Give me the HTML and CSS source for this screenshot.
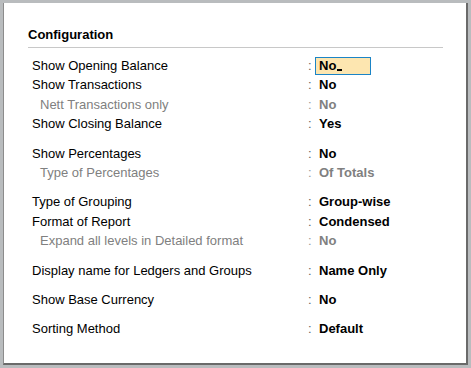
FILE: index.html
```html
<!DOCTYPE html>
<html>
<head>
<meta charset="utf-8">
<link rel="stylesheet" href="styles.css">
</head>
<body>
<div class="panel">
  <div class="heading">Configuration</div>
  <div class="group">
    <div class="row"><span class="label">Show Opening Balance</span><span class="colon">:</span><span class="value"><span class="input">No<span class="cursor"></span></span></span></div>
    <div class="row"><span class="label">Show Transactions</span><span class="colon">:</span><span class="value">No</span></div>
    <div class="row sub"><span class="label">Nett Transactions only</span><span class="colon">:</span><span class="value">No</span></div>
    <div class="row"><span class="label">Show Closing Balance</span><span class="colon">:</span><span class="value">Yes</span></div>
  </div>
  <div class="group">
    <div class="row"><span class="label">Show Percentages</span><span class="colon">:</span><span class="value">No</span></div>
    <div class="row sub"><span class="label">Type of Percentages</span><span class="colon">:</span><span class="value">Of Totals</span></div>
  </div>
  <div class="group">
    <div class="row"><span class="label">Type of Grouping</span><span class="colon">:</span><span class="value">Group-wise</span></div>
    <div class="row"><span class="label">Format of Report</span><span class="colon">:</span><span class="value">Condensed</span></div>
    <div class="row sub"><span class="label">Expand all levels in Detailed format</span><span class="colon">:</span><span class="value">No</span></div>
  </div>
  <div class="group">
    <div class="row"><span class="label">Display name for Ledgers and Groups</span><span class="colon">:</span><span class="value">Name Only</span></div>
  </div>
  <div class="group">
    <div class="row"><span class="label">Show Base Currency</span><span class="colon">:</span><span class="value">No</span></div>
  </div>
  <div class="group">
    <div class="row"><span class="label">Sorting Method</span><span class="colon">:</span><span class="value">Default</span></div>
  </div>
</div>
</body>
</html>
```
FILE: styles.css
```css
html, body {
  margin: 0;
  padding: 0;
}
body {
  background: #b9bcbe;
  width: 471px;
  height: 368px;
  padding: 3px 3px 3px 3px;
  box-sizing: border-box;
  font-family: "Liberation Sans", Arial, sans-serif;
  font-size: 13px;
  color: #000;
}
.panel {
  box-sizing: border-box;
  width: 465px;
  height: 362px;
  background: #fff;
  border-left: 1px solid #8c8c8c;
  border-right: 2px solid #6a6a6a;
  border-bottom: 2px solid #6a6a6a;
  padding: 24px 23px 0 24px;
}
.heading {
  font-weight: bold;
  line-height: 16px;
  padding-bottom: 4px;
  border-bottom: 1px solid #c8c8c8;
  margin-bottom: 8px;
}
.group {
  margin-bottom: 10px;
}
.row {
  display: flex;
  line-height: 19.4px;
  height: 19.4px;
  padding-left: 4px;
}
.label {
  flex: 0 0 276px;
  white-space: nowrap;
}
.colon {
  flex: 0 0 11px;
  color: #666;
}
.value {
  font-weight: bold;
  white-space: nowrap;
  display: flex;
  align-items: center;
}
.sub .label {
  padding-left: 8px;
  box-sizing: border-box;
  color: #808080;
}
.sub .colon {
  color: #9a9a9a;
}
.sub .value {
  color: #808080;
}
.input {
  display: flex;
  align-items: center;
  box-sizing: border-box;
  width: 56px;
  height: 18px;
  margin-left: -4px;
  padding-left: 3px;
  background: #fde6b0;
  border: 1px solid #1b84c6;
  line-height: 16px;
}
.cursor {
  display: inline-block;
  width: 5px;
  height: 2px;
  background: #000;
  align-self: flex-end;
  margin-bottom: 3px;
  margin-left: 1px;
}
```
